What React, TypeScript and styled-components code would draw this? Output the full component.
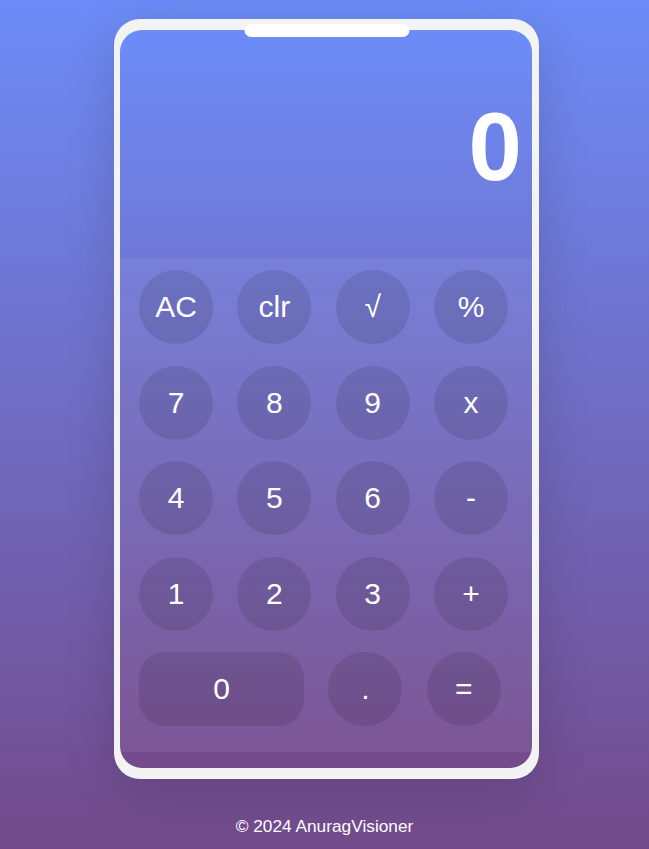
import React, { useState } from "react";
import styled, { createGlobalStyle } from "styled-components";

const GlobalStyle = createGlobalStyle`
  * { box-sizing: border-box; }
  body {
    margin: 0;
    font-family: "Liberation Sans", Arial, sans-serif;
  }
`;

const Page = styled.div`
  min-height: 100vh;
  display: flex;
  flex-direction: column;
  align-items: center;
  padding-top: 19px;
  background: linear-gradient(to bottom, #6d8cf8, #724a8a);
`;

const Phone = styled.div`
  position: relative;
  width: 425px;
  margin-left: 4px;
  padding: 11px 7px 11px 6px;
  background: #f3f3f3;
  border-radius: 26px;
  box-shadow: 0 10px 50px rgba(0, 0, 0, 0.15);
`;

const Notch = styled.div`
  position: absolute;
  top: 5px;
  left: 50%;
  transform: translateX(-50%);
  width: 165px;
  height: 13px;
  background: #fff;
  border-radius: 7px;
`;

const Screen = styled.div`
  height: 738px;
  border-radius: 22px;
  overflow: hidden;
  display: flex;
  flex-direction: column;
  background: linear-gradient(to bottom, #6d8cf8, #744a8c);
`;

const Display = styled.div`
  height: 228px;
  display: flex;
  align-items: center;
  justify-content: flex-end;
  padding: 6px 10px 0 0;
  color: #fff;
  font-size: 96px;
  font-weight: 700;
`;

const Keypad = styled.div`
  display: flex;
  flex-direction: column;
  gap: 21.5px;
  padding: 12px 19px 26px;
  background: rgba(255, 255, 255, 0.06);
`;

const Row = styled.div`
  display: flex;
  gap: 24.33px;
`;

const Key = styled.button<{ $wide?: boolean }>`
  width: ${(p) => (p.$wide ? "165px" : "74px")};
  height: 74px;
  border: none;
  border-radius: ${(p) => (p.$wide ? "26px" : "50%")};
  background: rgba(0, 0, 0, 0.1);
  color: #fff;
  font-family: "Liberation Sans", Arial, sans-serif;
  font-size: 30px;
  padding: 0;
  cursor: pointer;
`;

const Footer = styled.footer`
  margin-top: 37px;
  color: #fff;
  font-size: 17.3px;
`;

const rows = [
  ["AC", "clr", "√", "%"],
  ["7", "8", "9", "x"],
  ["4", "5", "6", "-"],
  ["1", "2", "3", "+"],
];

export default function App() {
  const [value, setValue] = useState("0");

  const press = (k: string) => {
    if (k === "AC") return setValue("0");
    if (k === "clr") return setValue(value.length > 1 ? value.slice(0, -1) : "0");
    setValue(value === "0" ? k : value + k);
  };

  return (
    <>
      <GlobalStyle />
      <Page>
        <Phone>
          <Notch />
          <Screen>
            <Display>{value}</Display>
            <Keypad>
              {rows.map((row) => (
                <Row key={row.join("")}>
                  {row.map((k) => (
                    <Key key={k} onClick={() => press(k)}>
                      {k}
                    </Key>
                  ))}
                </Row>
              ))}
              <Row>
                <Key $wide onClick={() => press("0")}>0</Key>
                <Key onClick={() => press(".")}>.</Key>
                <Key onClick={() => press("=")}>=</Key>
              </Row>
            </Keypad>
          </Screen>
        </Phone>
        <Footer>© 2024 AnuragVisioner</Footer>
      </Page>
    </>
  );
}
